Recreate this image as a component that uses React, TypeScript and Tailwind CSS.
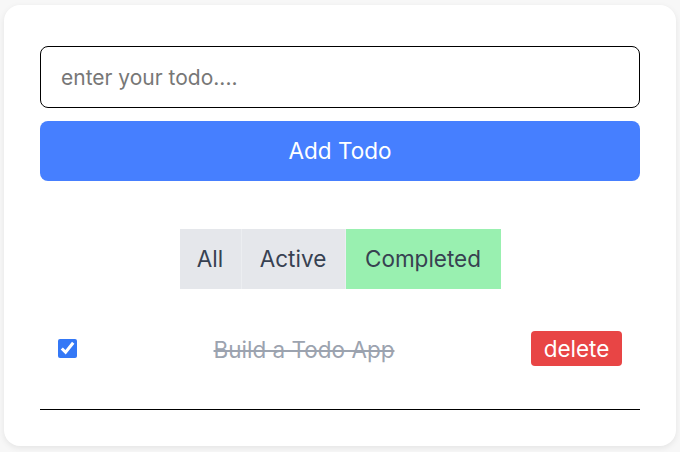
import { useState } from "react";

type Filtro = "all" | "active" | "completed";

export default function App() {
  const [filtro, setFiltro] = useState<Filtro>("completed");
  const [hecho, setHecho] = useState(true);

  const filtros: { id: Filtro; label: string; w: string }[] = [
    { id: "all", label: "All", w: "w-[62px]" },
    { id: "active", label: "Active", w: "w-[104px]" },
    { id: "completed", label: "Completed", w: "w-[155px]" },
  ];

  return (
    <main className="min-h-screen bg-[#f7f7f7] pt-[5px] pl-[4px] pr-[4px] font-['Inter',sans-serif]">
      <div className="h-[441px] rounded-2xl bg-white px-9 pt-[41px] shadow-[0_2px_6px_rgba(0,0,0,0.08)]">
        <input
          placeholder="enter your todo...."
          className="h-[62px] w-full rounded-lg border-[1.5px] border-black px-5 text-[21px] text-gray-800 outline-none placeholder:text-[#777]"
        />

        <button className="mt-[13px] h-[60px] w-full rounded-lg bg-[#467fff] text-[22.5px] text-white">
          Add Todo
        </button>

        <div className="mt-12 flex justify-center">
          {filtros.map((f) => (
            <button
              key={f.id}
              onClick={() => setFiltro(f.id)}
              className={`h-[60px] ${f.w} border-r border-[#eceef1] text-[22.5px] text-[#374151] last:border-r-0 ${
                filtro === f.id ? "bg-[#99f0b0]" : "bg-[#e5e7eb]"
              }`}
            >
              {f.label}
            </button>
          ))}
        </div>

        <div className="mt-[42px] flex h-[35px] items-center pl-[18px] pr-[18px]">
          <input
            type="checkbox"
            checked={hecho}
            onChange={() => setHecho(!hecho)}
            className="h-[19px] w-[19px] accent-[#3478f6]"
          />
          <span
            className={`flex-1 pt-[3px] text-center text-[22.5px] ${
              hecho ? "text-[#9ca3af] line-through" : "text-gray-800"
            }`}
          >
            Build a Todo App
          </span>
          <button className="h-[35px] w-[91px] rounded bg-[#e84545] text-[22.5px] text-white">
            delete
          </button>
        </div>

        <hr className="mt-[43px] border-t-[1.5px] border-black" />
      </div>
    </main>
  );
}
